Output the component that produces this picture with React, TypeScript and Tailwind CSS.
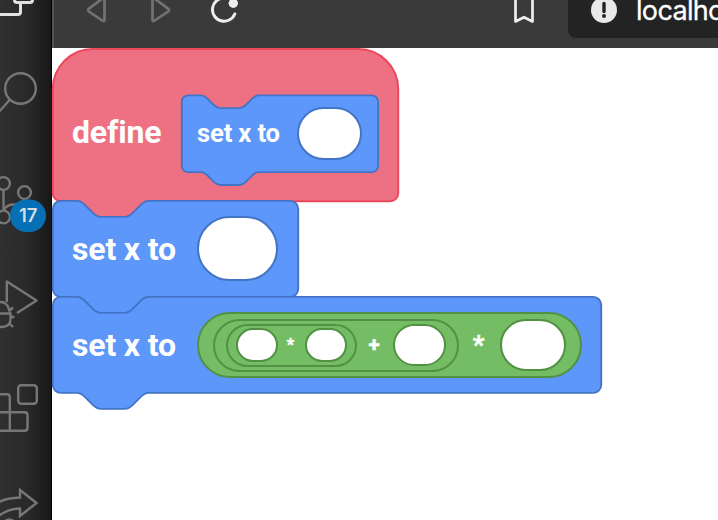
import type { ReactNode } from "react";

const BLUE = "#5c97f9";
const BLUE_EDGE = "#4374c6";

/** Outline of a stackable statement block, in block units. */
function statementPath(w: number, h = 48) {
  return `M0 4A4 4 0 0 1 4 0H12c2 0 3 1 4 2l4 4c1 1 2 2 4 2h12c2 0 3-1 4-2l4-4c1-1 2-2 4-2H${w - 4}a4 4 0 0 1 4 4V${h - 4}a4 4 0 0 1-4 4H48c-2 0-3 1-4 2l-4 4c-1 1-2 2-4 2H24c-2 0-3-1-4-2l-4-4c-1-1-2-2-4-2H4a4 4 0 0 1-4-4z`;
}

/** Outline of the rounded-top definition block, in block units. */
function hatPath(w: number, h: number) {
  return `M0 20A20 20 0 0 1 20 0H${w - 20}a20 20 0 0 1 20 20V${h - 4}a4 4 0 0 1-4 4H48c-2 0-3 1-4 2l-4 4c-1 1-2 2-4 2H24c-2 0-3-1-4-2l-4-4c-1-1-2-2-4-2H4a4 4 0 0 1-4-4z`;
}

function Shape({ d, scale, dx, dy, fill, stroke, line }: { d: string; scale: number; dx: number; dy: number; fill: string; stroke: string; line: number }) {
  return (
    <svg className="absolute left-0 top-0 h-full w-full overflow-visible" aria-hidden="true">
      <path d={d} transform={`translate(${dx} ${dy}) scale(${scale})`} fill={fill} stroke={stroke} strokeWidth={line} />
    </svg>
  );
}

function Slot({ className }: { className: string }) {
  return <div className={`shrink-0 rounded-full border-2 bg-white ${className}`} />;
}

function Op({ className, children }: { className: string; children: ReactNode }) {
  return <span className={`shrink-0 pr-[2px] text-center leading-none [-webkit-text-stroke:0.5px_white] ${className}`}>{children}</span>;
}

function Sidebar() {
  return (
    <aside className="h-full w-[52px] shrink-0 border-r border-black bg-[linear-gradient(90deg,#303030_0%,#292929_55%,#181818_100%)]">
      <svg width="51" height="520" viewBox="0 0 51 520" fill="none" stroke="#777777" strokeWidth="2.4" strokeLinejoin="round">
        <g stroke="#e2e2e2" strokeWidth="3">
          <path d="M14.5-4v4q0 2.500 2.500 2.500H30q2.500 0 2.500-2.500v-4" />
          <path d="M0 14.500H18q2.500 0 2.500-2.500V3" />
        </g>
        <circle cx="20.500" cy="88.500" r="15.300" />
        <path d="M10 99.500L-2 113" />
        <circle cx="3.500" cy="183.500" r="6.400" />
        <circle cx="24.500" cy="192.500" r="6.400" />
        <circle cx="3.500" cy="217" r="6.400" />
        <path d="M3.500 190v20.500M4 210q2-5 9-5.500h4q5-1 7.500-5.500" />
        <path d="M6.800 302V281.500L36.500 300.500L17 313" />
        <path d="M-7 314v-2.500a6 6.500 0 0 1 16-1.500q1.500 1.500 1.500 5v4q0 8-9 8t-9-8M-3 313.500H10M9 311l4-3.500M10.500 317h4M9 323l4 4" />
        <rect x="18.200" y="385.200" width="18.600" height="18.600" rx="3" />
        <path d="M-2 394.200H7q2.800 0 2.800 2.800v33.500M-2 412.200H24.500q3 0 3 3v12.500q0 3-3 3H-2" />
        <path d="M-4 504Q4 498 20 497.500V490L36.500 503L20 516v-7.500Q8 508-4 518" strokeLinejoin="miter" />
        <circle cx="9.500" cy="526" r="6.500" />
        <rect x="10" y="199.500" width="36" height="32.500" rx="16.250" fill="#066fb5" stroke="none" />
        <text x="28.300" y="222.300" textAnchor="middle" fill="#d5dee5" stroke="none" className="font-['Inter'] text-[18.5px] font-semibold">17</text>
      </svg>
    </aside>
  );
}

function Toolbar() {
  return (
    <header className="flex h-12 w-full shrink-0 border-l-2 border-[#555555] bg-[#3a3a3a]">
      <svg width="514" height="48" viewBox="54 0 514 48" fill="none" strokeLinecap="round" strokeLinejoin="round" className="shrink-0">
        <g stroke="#727272" strokeWidth="2.700">
          <path d="M104.500-2.500V19.500q0 2.500-2.200 1L89 11.700q-2-1.500 0-3L104.500-3z" />
          <path d="M152.500-2.500V19.500q0 2.500 2.200 1L168 11.700q2-1.500 0-3L152.500-3z" />
        </g>
        <path d="M224.500-2A11.600 11.600 0 1 0 234.800 14" stroke="#eeeeee" strokeWidth="3" />
        <circle cx="233.300" cy="3.300" r="4.700" fill="#eeeeee" />
        <path d="M515.500-3V21.500L524 17.200L532.500 21.500V-3" stroke="#eeeeee" strokeWidth="2.700" />
      </svg>
      <div className="flex h-[38px] flex-1 overflow-hidden rounded-bl-lg bg-[#232323]">
        <svg width="68" height="38" viewBox="0 0 68 38" className="shrink-0">
          <circle cx="36" cy="10" r="13" fill="#e8e8e8" />
          <path d="M36 3.500v8" stroke="#232323" strokeWidth="3.400" strokeLinecap="round" />
          <circle cx="36" cy="16" r="2" fill="#232323" />
        </svg>
        <span className="-mt-[5px] whitespace-nowrap font-['Inter'] text-[27px] leading-8 tracking-[-0.025em] text-white [-webkit-text-stroke:0.3px_white]">localhost</span>
      </div>
    </header>
  );
}

function DefineBlock() {
  return (
    <div className="relative flex h-[153px] w-[347px] pl-5">
      <Shape d={hatPath(172.7, 76.1)} scale={2} dx={0.8} dy={1} fill="#ed7182" stroke="#ec485c" line={1} />
      <span className="relative mt-[68px] w-[109px] leading-8">define</span>
      <div className="relative mt-[47px] flex h-[78px] w-[198px] pl-4 text-[25.6px]">
        <Shape d={statementPath(122.7)} scale={1.6} dx={0.8} dy={0.4} fill={BLUE} stroke={BLUE_EDGE} line={1.15} />
        <span className="relative mt-[22px] w-[100px] leading-8">set x to</span>
        <Slot className="relative mt-3 h-[53px] w-[65px] border-[#4374c6]" />
      </div>
    </div>
  );
}

function SetBlock({ units, className, children }: { units: number; className: string; children: ReactNode }) {
  return (
    <div className={`relative flex h-24 pl-5 ${className}`}>
      <Shape d={statementPath(units)} scale={2} dx={0.8} dy={-0.1} fill={BLUE} stroke={BLUE_EDGE} line={0.95} />
      <span className="relative mt-8 w-[125px] leading-8">set x to</span>
      {children}
    </div>
  );
}

function Expression() {
  return (
    <div className="relative mt-[15px] flex h-[66px] w-[385px] items-center rounded-full border-2 border-[#529143] bg-[#74bd65] pl-[14px]">
      <div className="flex h-[53px] w-[246px] shrink-0 items-center rounded-full border-2 border-[#529143] pl-[11px]">
        <div className="flex h-[43px] w-[131px] shrink-0 items-center rounded-full border-2 border-[#529143] pl-2">
          <Slot className="h-[34px] w-[42px] border-[#529143]" />
          <Op className="w-[27px] pt-px text-[16.4px]">*</Op>
          <Slot className="h-[34px] w-[42px] border-[#529143]" />
        </div>
        <Op className="w-[36px] text-[20.5px]">+</Op>
        <Slot className="h-[42px] w-[53px] border-[#529143]" />
      </div>
      <Op className="w-[41px] pt-[2px] text-[25.6px]">*</Op>
      <Slot className="h-[52px] w-[66px] border-[#529143]" />
    </div>
  );
}

export default function App() {
  return (
    <div className="flex h-[520px] w-[718px] overflow-hidden bg-white">
      <Sidebar />
      <div className="flex min-w-0 flex-1 flex-col">
        <Toolbar />
        <main className="flex flex-1 flex-col items-start whitespace-nowrap font-['Roboto',sans-serif] text-[32px] font-bold tracking-[-0.005em] text-white">
          <DefineBlock />
          <SetBlock units={122.7} className="w-[247px]">
            <Slot className="relative mt-[15px] h-[65px] w-[81px] border-[#4374c6]" />
          </SetBlock>
          <SetBlock units={274.2} className="w-[550px]">
            <Expression />
          </SetBlock>
        </main>
      </div>
    </div>
  );
}
